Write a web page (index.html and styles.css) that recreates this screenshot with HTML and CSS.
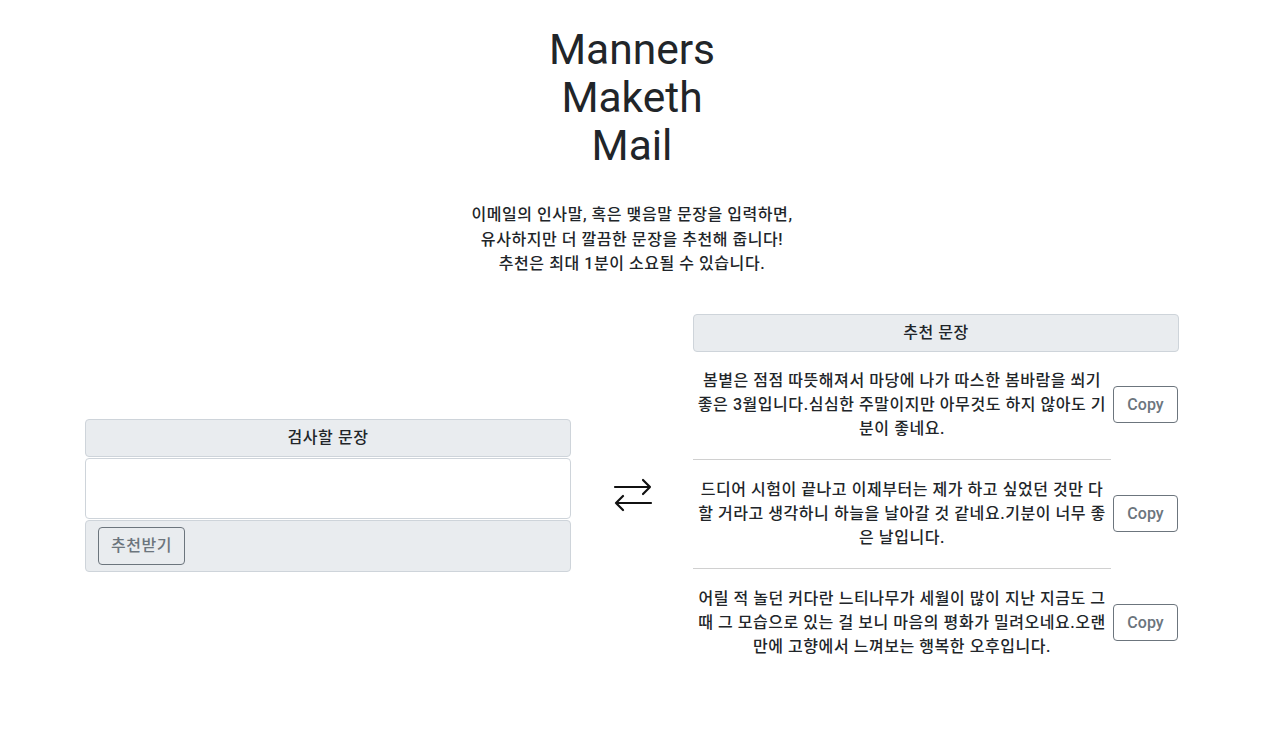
FILE: index.html
```html
<!DOCTYPE html>
<html lang="ko">
<head>
<meta charset="utf-8">
<title>Manners Maketh Mail</title>
<link rel="stylesheet" href="styles.css">
</head>
<body>
<header class="hero">
  <h1 class="title">Manners<br>Maketh<br>Mail</h1>
  <p class="lead">이메일의 인사말, 혹은 맺음말 문장을 입력하면,<br>유사하지만 더 깔끔한 문장을 추천해 줍니다!<br>추천은 최대 1분이 소요될 수 있습니다.</p>
</header>
<main class="workspace">
  <section class="input-panel">
    <div class="panel-head">검사할 문장</div>
    <textarea class="input-box"></textarea>
    <div class="panel-foot"><button class="btn">추천받기</button></div>
  </section>
  <div class="swap">
    <svg width="40" height="36" viewBox="0 0 40 36" fill="none" stroke="#111" stroke-width="2.2" stroke-linecap="round" stroke-linejoin="round">
      <path d="M2 9H37M30 2L37 9L30 16"/>
      <path d="M38 25H3M10 18L3 25L10 32"/>
    </svg>
  </div>
  <section class="result-panel">
    <div class="panel-head">추천 문장</div>
    <div class="result-list">
      <div class="result">
        <p class="result-text">봄볕은 점점 따뜻해져서 마당에 나가 따스한 봄바람을 쐬기 <span class="nowrap">좋은</span> 3월입니다.심심한 주말이지만 아무것도 하지 않아도 기분이 좋네요.</p>
        <button class="btn copy">Copy</button>
      </div>
      <hr class="divider">
      <div class="result">
        <p class="result-text">드디어 시험이 끝나고 이제부터는 제가 하고 싶었던 것만 다 할 거라고 생각하니 하늘을 날아갈 것 같네요.기분이 너무 좋은 날입니다.</p>
        <button class="btn copy">Copy</button>
      </div>
      <hr class="divider">
      <div class="result">
        <p class="result-text">어릴 적 놀던 커다란 느티나무가 세월이 많이 지난 지금도 그 때 그 모습으로 있는 걸 보니 마음의 평화가 밀려오네요.오랜만에 고향에서 느껴보는 행복한 오후입니다.</p>
        <button class="btn copy">Copy</button>
      </div>
    </div>
  </section>
</main>
</body>
</html>
```
FILE: styles.css
```css
* { box-sizing: border-box; }
body {
  margin: 0;
  font-family: Roboto, "Noto Sans CJK KR", sans-serif;
  font-size: 16px;
  line-height: 1.5;
  color: #212529;
  background: #fff;
}
.hero {
  text-align: center;
  padding-top: 26px;
  padding-left: 3px;
}
.title {
  margin: 0;
  font-size: 42.5px;
  line-height: 48px;
  font-weight: 400;
}
.lead {
  margin: 33px 0 0;
  line-height: 24.5px;
  font-weight: 500;
  letter-spacing: 0.55px;
}
.workspace {
  display: flex;
  align-items: center;
  width: 1094px;
  margin: 37px 0 0 85px;
}
.input-panel, .result-panel {
  width: 486px;
  flex: none;
}
.panel-head {
  background: #e9ecef;
  border: 1px solid #ced4da;
  border-radius: 4px;
  text-align: center;
  height: 38px;
  line-height: 36px;
  font-weight: 500;
  letter-spacing: 0.55px;
}
.input-box {
  display: block;
  width: 100%;
  height: 61px;
  margin: 1px 0 0;
  border: 1px solid #ced4da;
  border-radius: 4px;
  resize: none;
  font: inherit;
}
.panel-foot {
  margin-top: 1px;
  background: #e9ecef;
  border: 1px solid #ced4da;
  border-radius: 4px;
  padding: 6px 12px;
}
.btn {
  font: inherit;
  font-weight: 500;
  letter-spacing: 0.55px;
  color: #6c757d;
  background: transparent;
  border: 1px solid #6c757d;
  border-radius: 4px;
  height: 38px;
  padding: 0 12px;
  cursor: pointer;
}
.swap {
  flex: 1;
  display: flex;
  justify-content: center;
  padding-left: 2px;
}
.result-list {
  padding: 17px 0 19px;
}
.result {
  display: flex;
  align-items: center;
  gap: 2px;
}
.result-text {
  width: 418px;
  margin: 0;
  text-align: center;
  line-height: 24px;
  font-weight: 500;
  letter-spacing: 0.55px;
}
.nowrap { white-space: nowrap; }
.copy {
  width: 65px;
  height: 37px;
  padding: 0;
  font-size: 16px;
  font-weight: 500;
  letter-spacing: 0;
}
.divider {
  width: 418px;
  margin: 18px 0;
  border: 0;
  border-top: 1px solid #d0d0d0;
}
```
